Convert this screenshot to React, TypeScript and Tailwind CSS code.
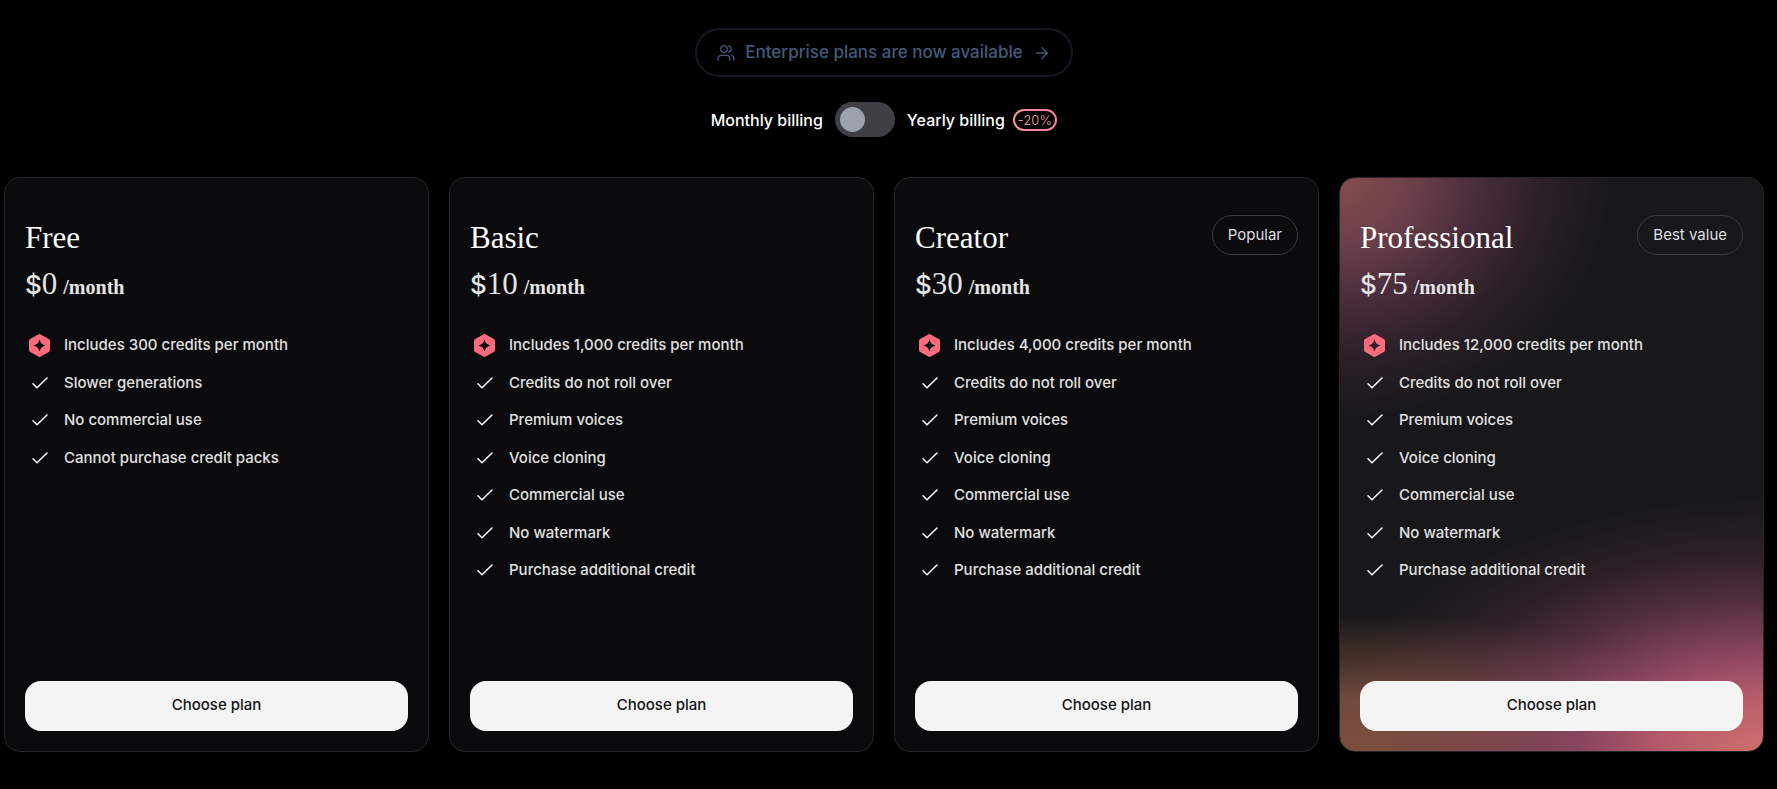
import { useState } from "react";
import { ArrowRight } from "lucide-react";

type Plan = {
  name: string;
  price: string;
  features: string[];
  tag?: string;
  featured?: boolean;
};

const shared = [
  "Credits do not roll over",
  "Premium voices",
  "Voice cloning",
  "Commercial use",
  "No watermark",
  "Purchase additional credit",
];

const plans: Plan[] = [
  {
    name: "Free",
    price: "0",
    features: [
      "Includes 300 credits per month",
      "Slower generations",
      "No commercial use",
      "Cannot purchase credit packs",
    ],
  },
  { name: "Basic", price: "10", features: ["Includes 1,000 credits per month", ...shared] },
  { name: "Creator", price: "30", tag: "Popular", features: ["Includes 4,000 credits per month", ...shared] },
  {
    name: "Professional",
    price: "75",
    tag: "Best value",
    featured: true,
    features: ["Includes 12,000 credits per month", ...shared],
  },
];

function UsersIcon() {
  return (
    <svg width="18" height="18" viewBox="0 0 18 18" fill="none" stroke="currentColor" strokeWidth="1.3" strokeLinecap="round" aria-hidden="true">
      <circle cx="7" cy="5" r="3.3" />
      <path d="M1 16.3v-1.8a3.2 3.2 0 0 1 3.2-3.2h5.4a3.2 3.2 0 0 1 3.2 3.2v1.8" />
      <path d="M11.6 1.8a3.3 3.3 0 0 1 0 6.4" />
      <path d="M14.4 11.4a3.2 3.2 0 0 1 2.5 3.1v1.8" />
    </svg>
  );
}

function CreditIcon() {
  return (
    <svg width="21" height="23" viewBox="0 0 21 23" aria-hidden="true">
      <path
        fillRule="evenodd"
        fill="#ff6b7d"
        d="M9.3.4a2.4 2.4 0 0 1 2.4 0l8.1 4.5A2.4 2.4 0 0 1 21 7v9a2.4 2.4 0 0 1-1.2 2.1l-8.1 4.5a2.4 2.4 0 0 1-2.4 0l-8.1-4.5A2.4 2.4 0 0 1 0 16V7a2.4 2.4 0 0 1 1.2-2.1ZM10.5 5.5C11.7 9.2 12.8 10.3 16.5 11.5 12.8 12.7 11.7 13.8 10.5 17.5 9.3 13.8 8.2 12.7 4.5 11.5 8.2 10.3 9.3 9.2 10.5 5.5Z"
      />
    </svg>
  );
}

function CheckIcon() {
  return (
    <svg width="16" height="12" viewBox="0 0 16 12" fill="none" stroke="#fff" strokeWidth="1.5" strokeLinecap="round" strokeLinejoin="round" aria-hidden="true">
      <path d="M1 6.8 5 10.8 15 1" />
    </svg>
  );
}

function PlanCard({ plan }: { plan: Plan }) {
  const surface = plan.featured
    ? "bg-[#18181a] bg-[radial-gradient(ellipse_64%_42%_at_0%_0%,#834d4f_0%,#6b3f49_28%,#482c3a_52%,#2c2028_74%,#18181a00_100%),radial-gradient(ellipse_104%_44%_at_100%_100%,#cc706b_0%,#b85c6c_22%,#8e4664e6_42%,#8a446280_60%,#8a446230_78%,#8a446200_100%),radial-gradient(ellipse_90%_24%_at_5%_100%,#7a4f3a_0%,#714a3a_38%,#714a3a80_66%,#714a3a00_100%)]"
    : "bg-[#0b0b0d]";
  return (
    <article className={`flex flex-col rounded-2xl border border-[#252527] bg-origin-border px-5 pb-5 pt-[37px] ${surface}`}>
      <header className="flex items-start justify-between gap-3">
        <h2 className="font-['Liberation_Serif',serif] text-[31px] leading-[46px] text-white">{plan.name}</h2>
        {plan.tag && (
          <span className="flex h-10 items-center rounded-full border border-[#3b3b3e] px-[15px] text-[15px] text-[#dedee0]">
            {plan.tag}
          </span>
        )}
      </header>
      <p className="mt-[3px] flex h-10 items-baseline font-['Liberation_Serif',serif] leading-10 text-[#e4e4e4]">
        <span className="font-['Inter',sans-serif] text-[26px] leading-10 font-medium">$</span>
        <span className="text-[31px] leading-10">{plan.price}</span>
        <span className="ml-1.5 text-xl leading-10 font-bold">/month</span>
      </p>
      <ul className="mt-[30px] flex flex-col gap-[15px] pb-[99px]">
        {plan.features.map((feature, i) => (
          <li key={feature} className="flex items-center gap-[10px] text-[15px] leading-normal font-medium text-[#e0e0e0]">
            <span className="-my-1 flex w-[29px] justify-center">{i === 0 ? <CreditIcon /> : <CheckIcon />}</span>
            {feature}
          </li>
        ))}
      </ul>
      <button type="button" className="mt-auto h-[50px] w-full rounded-2xl bg-[#f4f4f4] text-[15px] font-medium text-[#131316]">
        Choose plan
      </button>
    </article>
  );
}

export default function App() {
  const [yearly, setYearly] = useState(false);
  return (
    <main className="min-h-screen bg-black pt-7 pr-[13px] pb-9 pl-1 font-['Inter',sans-serif]">
      <div className="flex justify-center">
        <a href="#enterprise" className="flex h-[49px] items-center gap-[10px] rounded-full border-2 border-[#191624] px-5 text-[17px] font-medium text-[#425b7b]">
          <UsersIcon />
          Enterprise plans are now available
          <ArrowRight size={18} strokeWidth={1.75} />
        </a>
      </div>
      <div className="mt-[25px] flex items-center justify-center text-base font-medium text-white">
        <label htmlFor="billing">Monthly billing</label>
        <span className="mx-3 grid h-[35px] w-[60px]">
          <input
            id="billing"
            type="checkbox"
            role="switch"
            checked={yearly}
            onChange={(e) => setYearly(e.target.checked)}
            className="peer col-start-1 row-start-1 h-[35px] w-[60px] cursor-pointer appearance-none rounded-full bg-[#3f3f45]"
          />
          <span className="pointer-events-none col-start-1 row-start-1 ml-[5px] size-[25px] self-center rounded-full bg-[#9da1ae] peer-checked:ml-[30px]" />
        </span>
        <label htmlFor="billing">Yearly billing</label>
        <span className="ml-2 flex h-[22px] rounded-full bg-linear-to-r from-[#fb9a85] to-[#f57aa5] p-0.5">
          <span className="flex items-center rounded-full bg-black px-[3px]">
            <span className="bg-linear-to-r from-[#fb9a85] to-[#e0708f] bg-clip-text text-[13px] leading-4 font-normal text-transparent">-20%</span>
          </span>
        </span>
      </div>
      <section className="mt-10 grid grid-cols-4 gap-5">
        {plans.map((plan) => (
          <PlanCard key={plan.name} plan={plan} />
        ))}
      </section>
    </main>
  );
}
